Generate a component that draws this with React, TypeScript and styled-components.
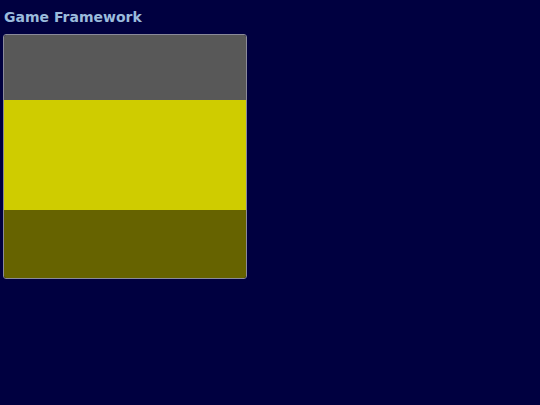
import { createGlobalStyle, styled } from "styled-components";

const GlobalStyle = createGlobalStyle`
  html, body {
    margin: 0;
    padding: 0;
    background: #000040;
  }
  body {
    font-family: "DejaVu Sans", sans-serif;
  }
`;

const Page = styled.div`
  padding: 9px 3px;
`;

const Title = styled.h1`
  margin: 0 0 8px 1px;
  font-size: 14px;
  line-height: 17px;
  font-weight: bold;
  color: #9bbbdc;
`;

const Board = styled.div`
  width: 242px;
  display: flex;
  flex-direction: column;
  border: 1px solid #8a8a9a;
  border-radius: 3px;
  overflow: hidden;
`;

const Band = styled.div<{ $color: string; $height: number }>`
  height: ${(p) => p.$height}px;
  background: ${(p) => p.$color};
`;

function App() {
  return (
    <Page>
      <GlobalStyle />
      <Title>Game Framework</Title>
      <Board>
        <Band $color="#585858" $height={65} />
        <Band $color="#cfcc00" $height={110} />
        <Band $color="#666300" $height={68} />
      </Board>
    </Page>
  );
}

export default App;
